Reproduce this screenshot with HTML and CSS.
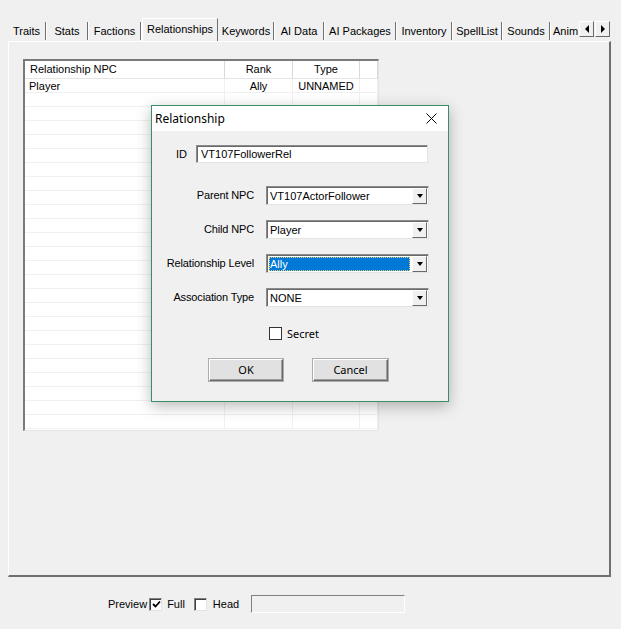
FILE: index.html
```html
<!DOCTYPE html>
<html>
<head>
<meta charset="utf-8">
<link rel="stylesheet" href="styles.css">
</head>
<body>
<div class="tabbar">
  <div class="tabs">
    <div class="tab t-traits">Traits</div>
    <div class="tab t-stats">Stats</div>
    <div class="tab t-factions">Factions</div>
    <div class="tab active t-rel">Relationships</div>
    <div class="tab t-keywords">Keywords</div>
    <div class="tab t-aidata">AI Data</div>
    <div class="tab t-aipack">AI Packages</div>
    <div class="tab t-inv">Inventory</div>
    <div class="tab t-spell">SpellList</div>
    <div class="tab t-sounds">Sounds</div>
    <div class="tab t-anim">Anim</div>
  </div>
  <div class="arrows">
    <div class="arrow"><span class="tri-left"></span></div>
    <div class="arrow"><span class="tri-right"></span></div>
  </div>
</div>
<div class="panel">
  <div class="list">
    <div class="lhead">
      <div class="hc c1">Relationship NPC</div>
      <div class="hc c2">Rank</div>
      <div class="hc c3">Type</div>
      <div class="hc c4"></div>
    </div>
    <div class="row"><div class="cell c1">Player</div><div class="cell c2">Ally</div><div class="cell c3">UNNAMED</div><div class="cell c4"></div></div>
    <div class="row"><div class="cell c1"></div><div class="cell c2"></div><div class="cell c3"></div><div class="cell c4"></div></div>
    <div class="row"><div class="cell c1"></div><div class="cell c2"></div><div class="cell c3"></div><div class="cell c4"></div></div>
    <div class="row"><div class="cell c1"></div><div class="cell c2"></div><div class="cell c3"></div><div class="cell c4"></div></div>
    <div class="row"><div class="cell c1"></div><div class="cell c2"></div><div class="cell c3"></div><div class="cell c4"></div></div>
    <div class="row"><div class="cell c1"></div><div class="cell c2"></div><div class="cell c3"></div><div class="cell c4"></div></div>
    <div class="row"><div class="cell c1"></div><div class="cell c2"></div><div class="cell c3"></div><div class="cell c4"></div></div>
    <div class="row"><div class="cell c1"></div><div class="cell c2"></div><div class="cell c3"></div><div class="cell c4"></div></div>
    <div class="row"><div class="cell c1"></div><div class="cell c2"></div><div class="cell c3"></div><div class="cell c4"></div></div>
    <div class="row"><div class="cell c1"></div><div class="cell c2"></div><div class="cell c3"></div><div class="cell c4"></div></div>
    <div class="row"><div class="cell c1"></div><div class="cell c2"></div><div class="cell c3"></div><div class="cell c4"></div></div>
    <div class="row"><div class="cell c1"></div><div class="cell c2"></div><div class="cell c3"></div><div class="cell c4"></div></div>
    <div class="row"><div class="cell c1"></div><div class="cell c2"></div><div class="cell c3"></div><div class="cell c4"></div></div>
    <div class="row"><div class="cell c1"></div><div class="cell c2"></div><div class="cell c3"></div><div class="cell c4"></div></div>
    <div class="row"><div class="cell c1"></div><div class="cell c2"></div><div class="cell c3"></div><div class="cell c4"></div></div>
    <div class="row"><div class="cell c1"></div><div class="cell c2"></div><div class="cell c3"></div><div class="cell c4"></div></div>
    <div class="row"><div class="cell c1"></div><div class="cell c2"></div><div class="cell c3"></div><div class="cell c4"></div></div>
    <div class="row"><div class="cell c1"></div><div class="cell c2"></div><div class="cell c3"></div><div class="cell c4"></div></div>
    <div class="row"><div class="cell c1"></div><div class="cell c2"></div><div class="cell c3"></div><div class="cell c4"></div></div>
    <div class="row"><div class="cell c1"></div><div class="cell c2"></div><div class="cell c3"></div><div class="cell c4"></div></div>
    <div class="row"><div class="cell c1"></div><div class="cell c2"></div><div class="cell c3"></div><div class="cell c4"></div></div>
    <div class="row"><div class="cell c1"></div><div class="cell c2"></div><div class="cell c3"></div><div class="cell c4"></div></div>
    <div class="row"><div class="cell c1"></div><div class="cell c2"></div><div class="cell c3"></div><div class="cell c4"></div></div>
    <div class="row"><div class="cell c1"></div><div class="cell c2"></div><div class="cell c3"></div><div class="cell c4"></div></div>
    <div class="row"><div class="cell c1"></div><div class="cell c2"></div><div class="cell c3"></div><div class="cell c4"></div></div>
  </div>
</div>
<div class="bottom">
  <span class="blabel">Preview</span>
  <span class="cbox checked"><svg width="9" height="9" viewBox="0 0 9 9"><path d="M1 4 L3.5 6.5 L8 1.5" fill="none" stroke="#000" stroke-width="1.8"/></svg></span>
  <span class="blabel">Full</span>
  <span class="cbox second"></span>
  <span class="blabel">Head</span>
  <span class="btext"></span>
</div>

<div class="dialog">
  <div class="titlebar">
    <span class="title">Relationship</span>
    <svg class="close" width="11" height="11" viewBox="0 0 11 11"><path d="M0.5 0.5 L10.5 10.5 M10.5 0.5 L0.5 10.5" stroke="#000" stroke-width="1" fill="none"/></svg>
  </div>
  <div class="dbody">
    <div class="idrow">
      <span class="idlabel">ID</span>
      <div class="input">VT107FollowerRel</div>
    </div>
    <div class="form">
      <div class="flabel">Parent NPC</div>
      <div class="select"><span class="val">VT107ActorFollower</span><span class="ddbtn"><span class="tri-down"></span></span></div>
      <div class="flabel">Child NPC</div>
      <div class="select"><span class="val">Player</span><span class="ddbtn"><span class="tri-down"></span></span></div>
      <div class="flabel">Relationship Level</div>
      <div class="select"><span class="val sel">Ally</span><span class="ddbtn"><span class="tri-down"></span></span></div>
      <div class="flabel">Association Type</div>
      <div class="select"><span class="val">NONE</span><span class="ddbtn"><span class="tri-down"></span></span></div>
    </div>
    <div class="secret">
      <span class="flatbox"></span>
      <span>Secret</span>
    </div>
    <div class="buttons">
      <div class="btn ok">OK</div>
      <div class="btn cancel">Cancel</div>
    </div>
  </div>
</div>
</body>
</html>
```

FILE: styles.css
```css
html, body {
  margin: 0;
  padding: 0;
}
body {
  width: 621px;
  height: 629px;
  overflow: hidden;
  background: #f0f0f0;
  font-family: "Liberation Sans", Arial, sans-serif;
  font-size: 11px;
  color: #000;
  position: relative;
}

/* Tabs */
.tabbar {
  display: flex;
  align-items: flex-end;
  height: 41px;
  margin-left: 8px;
  width: 603px;
}
.tabs {
  display: flex;
  align-items: flex-end;
  width: 570px;
  height: 41px;
  overflow: hidden;
}
.tab {
  flex: none;
  box-sizing: border-box;
  height: 18px;
  line-height: 18px;
  margin-bottom: 1px;
  border-right: 1px solid #6f6f6f;
  box-shadow: 1px 0 0 #ffffff;
  margin-right: 1px;
  white-space: nowrap;
  text-align: center;
  position: relative;
}
.tab.active {
  height: 23px;
  line-height: 20px;
  margin-bottom: 0;
  background: #f0f0f0;
  border-top: 1px solid #ffffff;
  border-left: 1px solid #ffffff;
  border-right: 1px solid #6f6f6f;
  box-shadow: none;
}
.t-traits { width: 38px; }
.t-stats { width: 41px; }
.t-factions { width: 52px; }
.t-rel { width: 76px; }
.t-keywords { width: 55px; }
.t-aidata { width: 49px; }
.t-aipack { width: 71px; }
.t-inv { width: 55px; }
.t-spell { width: 49px; }
.t-sounds { width: 47px; }
.tab.t-anim {
  width: 27px;
  border-right: none;
  box-shadow: none;
  text-align: left;
  padding-left: 2px;
  overflow: hidden;
}
.arrows {
  display: flex;
  margin-bottom: 4px;
}
.arrow {
  width: 15px;
  height: 16px;
  background: #f0f0f0;
  border-top: 1px solid #ffffff;
  border-left: 1px solid #ffffff;
  border-right: 1px solid #696969;
  border-bottom: 1px solid #696969;
  box-sizing: border-box;
  display: flex;
  align-items: center;
  justify-content: center;
  margin-left: 1px;
}
.tri-left {
  width: 0;
  height: 0;
  border-top: 4px solid transparent;
  border-bottom: 4px solid transparent;
  border-right: 4px solid #000;
}
.tri-right {
  width: 0;
  height: 0;
  border-top: 4px solid transparent;
  border-bottom: 4px solid transparent;
  border-left: 4px solid #000;
}

/* Panel */
.panel {
  margin-left: 8px;
  width: 603px;
  height: 536px;
  box-sizing: border-box;
  border-top: 1px solid #ffffff;
  border-left: 1px solid #ffffff;
  border-right: 2px solid #6f6f6f;
  border-bottom: 2px solid #6f6f6f;
  padding: 17px 0 0 14px;
}

/* List */
.list {
  width: 356px;
  height: 372px;
  box-sizing: border-box;
  background: #ffffff;
  border-top: 2px solid #7a7a7a;
  border-left: 2px solid #7a7a7a;
  border-right: 1px solid #e3e3e3;
  border-bottom: 1px solid #e3e3e3;
  overflow: hidden;
}
.lhead, .row {
  display: grid;
  grid-template-columns: 200px 68px 67px 1fr;
}
.lhead {
  height: 18px;
  border-bottom: 1px solid #e5e5e5;
  box-sizing: border-box;
}
.hc {
  border-right: 1px solid #d9d9d9;
  line-height: 17px;
  white-space: nowrap;
}
.hc.c1 { padding-left: 5px; }
.hc.c2, .hc.c3 { text-align: center; }
.row {
  height: 14px;
  box-sizing: border-box;
  border-bottom: 1px solid #f0f0f0;
}
.cell {
  border-right: 1px solid #f0f0f0;
  line-height: 14px;
  white-space: nowrap;
}
.cell.c1 { padding-left: 4px; }
.cell.c2, .cell.c3 { text-align: center; }

/* Bottom */
.bottom {
  display: flex;
  align-items: center;
  height: 18px;
  margin-top: 18px;
  padding-left: 108px;
}
.blabel {
  margin-right: 3px;
}
.cbox {
  width: 13px;
  height: 13px;
  box-sizing: border-box;
  background: #ffffff;
  border-top: 1px solid #808080;
  border-left: 1px solid #808080;
  border-right: 1px solid #e3e3e3;
  border-bottom: 1px solid #e3e3e3;
  box-shadow: inset 1px 1px 0 #404040;
  display: inline-flex;
  align-items: center;
  justify-content: center;
  margin-right: 5px;
}
.cbox.checked { margin-left: -1px; }
.cbox.second { margin-left: 6px; margin-right: 6px; }
.cbox svg { margin: 1px 0 0 1px; }
.btext {
  margin-left: 9px;
  width: 154px;
  height: 18px;
  box-sizing: border-box;
  border-top: 1px solid #808080;
  border-left: 1px solid #808080;
  border-right: 1px solid #ffffff;
  border-bottom: 1px solid #ffffff;
  background: #f0f0f0;
}

/* Dialog (floats over the list) */
.dialog {
  position: absolute;
  left: 151px;
  top: 105px;
  width: 298px;
  height: 297px;
  box-sizing: border-box;
  border: 1px solid #3a8d66;
  background: #f0f0f0;
  box-shadow: 0 4px 14px rgba(0, 0, 0, 0.28);
}
.titlebar {
  height: 25px;
  background: #ffffff;
  display: flex;
  align-items: center;
  justify-content: space-between;
  padding: 0 11px 0 3px;
}
.title {
  font-family: "Noto Sans", "Liberation Sans", sans-serif;
  font-size: 12px;
}
.close { display: block; }
.dbody {
  padding-top: 14px;
}
.idrow {
  display: flex;
  align-items: center;
  height: 18px;
}
.idlabel {
  margin-left: 24px;
  width: 20px;
}
.input {
  width: 232px;
  height: 18px;
  box-sizing: border-box;
  background: #ffffff;
  border-top: 1px solid #8a8a8a;
  border-left: 1px solid #8a8a8a;
  border-right: 1px solid #e3e3e3;
  border-bottom: 1px solid #e3e3e3;
  box-shadow: inset 1px 1px 0 #6a6a6a;
  padding-left: 4px;
  line-height: 16px;
}
.form {
  margin-top: 23px;
  display: grid;
  grid-template-columns: 102px 163px;
  column-gap: 12px;
  row-gap: 15px;
}
.flabel {
  text-align: right;
  line-height: 19px;
  white-space: nowrap;
  letter-spacing: -0.15px;
}
.select {
  height: 19px;
  box-sizing: border-box;
  background: #ffffff;
  border-top: 1px solid #8a8a8a;
  border-left: 1px solid #8a8a8a;
  border-right: 1px solid #e3e3e3;
  border-bottom: 1px solid #e3e3e3;
  box-shadow: inset 1px 1px 0 #6a6a6a;
  display: flex;
  align-items: stretch;
  padding: 2px 1px 1px 2px;
}
.val {
  flex: 1;
  line-height: 15px;
  padding-left: 1px;
}
.val.sel {
  background: #0078d7;
  color: #ffffff;
  outline: 1px dotted #e8d070;
  outline-offset: -1px;
  margin-right: 2px;
}
.ddbtn {
  width: 15px;
  box-sizing: border-box;
  background: #f0f0f0;
  border-top: 1px solid #ffffff;
  border-left: 1px solid #ffffff;
  border-right: 1px solid #696969;
  border-bottom: 1px solid #696969;
  display: flex;
  align-items: center;
  justify-content: center;
  margin-top: -1px;
  margin-bottom: -1px;
}
.tri-down {
  width: 0;
  height: 0;
  border-left: 3.5px solid transparent;
  border-right: 3.5px solid transparent;
  border-top: 4px solid #000;
}
.secret {
  margin-top: 20px;
  margin-left: 117px;
  display: flex;
  align-items: center;
  height: 13px;
  font-family: "Noto Sans", "Liberation Sans", sans-serif;
  font-size: 11px;
}
.flatbox {
  width: 13px;
  height: 13px;
  box-sizing: border-box;
  border: 1px solid #333333;
  background: #ffffff;
  margin-right: 5px;
}
.buttons {
  margin-top: 19px;
  display: flex;
  gap: 30px;
  margin-left: 57px;
}
.btn {
  height: 22px;
  box-sizing: border-box;
  background: #e1e1e1;
  border-top: 1px solid #ffffff;
  border-left: 1px solid #ffffff;
  border-right: 1px solid #696969;
  border-bottom: 1px solid #696969;
  box-shadow: inset -1px -1px 0 #a0a0a0, 0 0 0 1px #adadad;
  text-align: center;
  line-height: 20px;
  font-family: "Noto Sans", "Liberation Sans", sans-serif;
  font-size: 11px;
}
.btn.ok { width: 74px; }
.btn.cancel { width: 75px; }
```
